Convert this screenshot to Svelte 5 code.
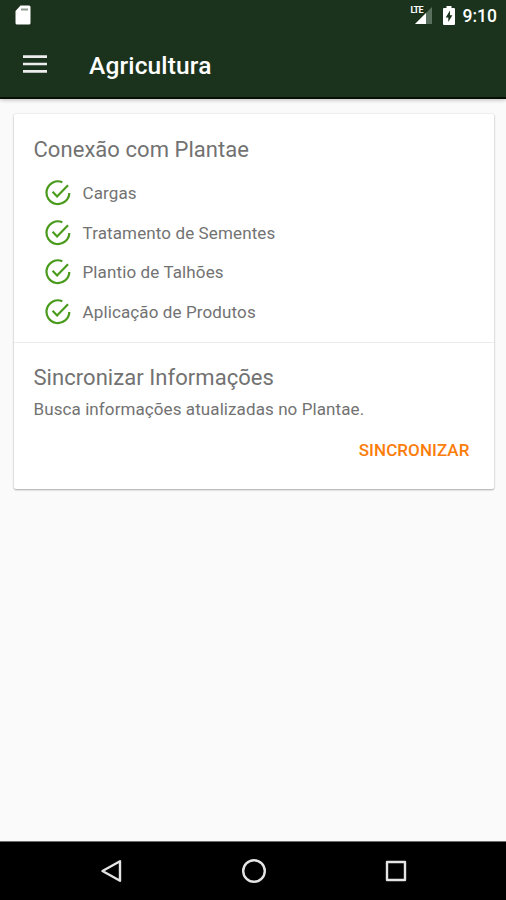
<script lang="ts">
	const connections = ['Cargas', 'Tratamento de Sementes', 'Plantio de Talhões', 'Aplicação de Produtos'];
</script>

<div class="screen">
	<header class="top">
		<div class="status-bar">
			<svg class="sd-card" width="16" height="20" viewBox="0 0 16 20">
				<path d="M5.500 0.500H14a1.500 1.500 0 0 1 1.500 1.500v16a1.500 1.500 0 0 1-1.500 1.500H2A1.500 1.500 0 0 1 .5 18V6z" fill="#fff" />
				<path d="M6 4.500h7" stroke="#8f9990" stroke-width="2" />
			</svg>
			<div class="indicators">
				<div class="signal">
					<svg width="24" height="20" viewBox="0 0 24 20">
						<path d="M22 2v17H5z" fill="#58705d" />
						<path d="M16 8v11H5z" fill="#fff" />
					</svg>
					<span class="lte">LTE</span>
				</div>
				<svg class="battery" width="12" height="19" viewBox="0 0 12 19">
					<path d="M3.500 0h5v2H11a1 1 0 0 1 1 1v15a1 1 0 0 1-1 1H1a1 1 0 0 1-1-1V3a1 1 0 0 1 1-1h2.500z" fill="#fff" />
					<path d="M7 4.500L2.700 11.500H5.300V16L9.400 9.300H7z" fill="#1b331c" />
				</svg>
				<span class="clock">9:10</span>
			</div>
		</div>
		<div class="app-bar">
			<svg class="menu" width="24" height="18" viewBox="0 0 24 18">
				<path d="M0 1.700h24M0 9h24M0 16.300h24" stroke="#ededed" stroke-width="2.700" />
			</svg>
			<h1>Agricultura</h1>
		</div>
	</header>

	<main>
		<div class="card">
			<section class="connection">
				<h2>Conexão com Plantae</h2>
				<ul>
					{#each connections as name}
						<li>
							<svg width="26" height="26" viewBox="0 0 26 26" fill="none" stroke="#4a9a1c">
								<path d="M17.300 2.200A11.400 11.400 0 1 0 24.300 13" stroke-width="2.200" />
								<path d="M7.600 11.800l4.500 4.600L23 5.300" stroke-width="2.200" />
							</svg>
							<span>{name}</span>
						</li>
					{/each}
				</ul>
			</section>
			<section class="sync">
				<h2>Sincronizar Informações</h2>
				<p>Busca informações atualizadas no Plantae.</p>
				<button>SINCRONIZAR</button>
			</section>
		</div>
	</main>

	<nav>
		<svg width="22" height="24" viewBox="0 0 22 24">
			<path d="M20 2.200v19.600L2.500 12z" />
		</svg>
		<svg width="26" height="26" viewBox="0 0 26 26">
			<circle cx="13" cy="13" r="10.800" />
		</svg>
		<svg width="22" height="22" viewBox="0 0 22 22">
			<rect x="2" y="2" width="18" height="18" />
		</svg>
	</nav>
</div>

<style>
	:global(body) {
		margin: 0;
	}

	.screen {
		height: 900px;
		display: flex;
		flex-direction: column;
		background: #fafafa;
		color: #727272;
		font-family: Roboto, sans-serif;
	}

	.top {
		height: 97px;
		background: #1b331c;
		border-bottom: 2px solid #060e06;
		box-shadow: 0 1px 4px rgba(0, 0, 0, 0.25);
		color: #fff;
	}

	.status-bar {
		height: 31px;
		display: flex;
		align-items: center;
		justify-content: space-between;
		padding: 0 9px 0 15px;
	}

	.sd-card {
		margin-bottom: 2px;
	}

	.indicators {
		display: flex;
		align-items: center;
	}

	.signal {
		position: relative;
		height: 20px;
		margin-right: 9px;
		margin-bottom: 2px;
	}

	.lte {
		position: absolute;
		top: 1px;
		left: 1px;
		font-size: 9px;
		line-height: 9px;
		font-weight: 700;
		letter-spacing: -0.8px;
		background: #1b331c;
	}

	.battery {
		margin-right: 8px;
	}

	.clock {
		font-size: 17.5px;
		font-weight: 500;
	}

	.app-bar {
		height: 66px;
		display: flex;
		align-items: center;
		padding-left: 23px;
	}

	h1 {
		margin: 4px 0 0 42px;
		font-size: 24.5px;
		line-height: 30px;
		font-weight: 500;
		letter-spacing: 0.15px;
	}

	main {
		flex: 1;
		padding: 15px 12px 0 14px;
	}

	.card {
		height: 375px;
		background: #fff;
		border-radius: 2px;
		box-shadow: 0 1px 2px rgba(0, 0, 0, 0.3), 0 0 2px rgba(0, 0, 0, 0.12);
	}

	.connection {
		height: 229px;
		box-sizing: border-box;
		padding: 22px 19.5px 0;
		border-bottom: 1px solid #ececec;
	}

	h2 {
		margin: 0;
		font-size: 22px;
		line-height: 28px;
		font-weight: 400;
		letter-spacing: 0.05px;
	}

	ul {
		margin: 9px 0 0 11px;
		padding: 0;
		list-style: none;
	}

	li {
		height: 39.8px;
		display: flex;
		align-items: center;
		gap: 12px;
		font-size: 17px;
		letter-spacing: 0.12px;
	}

	.sync {
		display: flex;
		flex-direction: column;
		padding: 21px 19.5px 0;
	}

	p {
		margin: 6px 0 0;
		font-size: 17px;
		line-height: 22px;
		letter-spacing: 0.09px;
	}

	button {
		align-self: flex-end;
		margin: 18px 5px 0 0;
		padding: 0;
		border: 0;
		background: none;
		color: #fb7d0b;
		font: 500 17px/24px Roboto, sans-serif;
		letter-spacing: 0.08px;
	}

	nav {
		height: 59px;
		box-sizing: border-box;
		display: flex;
		align-items: center;
		justify-content: space-between;
		padding: 0 99px 1px 100px;
		background: #000;
		border-top: 1px solid #6d6d6d;
	}

	nav svg {
		fill: none;
		stroke: #e4e4e4;
		stroke-width: 2.4;
		stroke-linejoin: round;
	}
</style>
